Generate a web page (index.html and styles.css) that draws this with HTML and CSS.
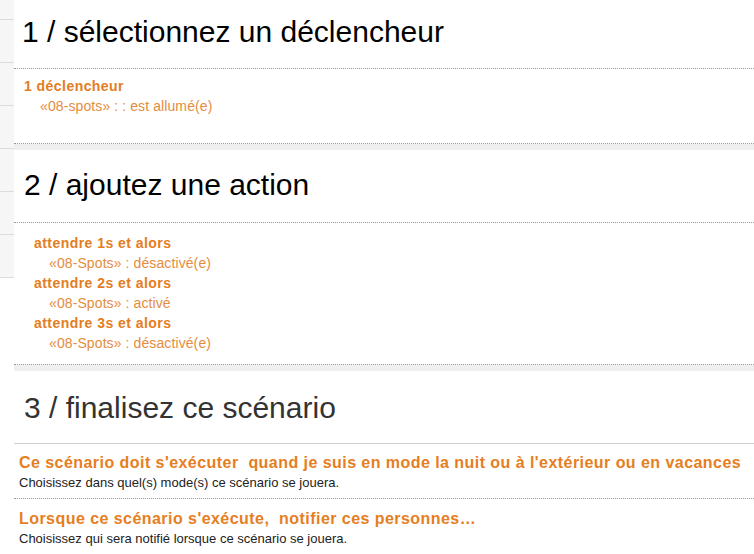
FILE: index.html
```html
<!DOCTYPE html>
<html lang="fr">
<head>
  <meta charset="UTF-8">
  <title>Nouveau scénario</title>
  <link rel="stylesheet" href="styles.css">
</head>
<body>
  <div class="page">
    <div class="sidebar">
      <div class="side-row first"></div>
      <div class="side-row"></div>
      <div class="side-row"></div>
      <div class="side-row"></div>
      <div class="side-row"></div>
      <div class="side-row"></div>
      <div class="side-row"></div>
    </div>

    <div class="wizard">
      <div class="step step-1">
        <h2 class="step-title">1 / sélectionnez un déclencheur</h2>
        <div class="step-body">
          <div class="item-title">1 déclencheur</div>
          <div class="item-detail">«08-spots» : : est allumé(e)</div>
        </div>
      </div>

      <div class="step step-2">
        <h2 class="step-title">2 / ajoutez une action</h2>
        <div class="step-body">
          <div class="item-title">attendre 1s et alors</div>
          <div class="item-detail">«08-Spots» : désactivé(e)</div>
          <div class="item-title">attendre 2s et alors</div>
          <div class="item-detail">«08-Spots» : activé</div>
          <div class="item-title">attendre 3s et alors</div>
          <div class="item-detail">«08-Spots» : désactivé(e)</div>
        </div>
      </div>

      <div class="step step-3">
        <h2 class="step-title">3 / finalisez ce scénario</h2>
        <div class="option">
          <div class="option-title">Ce scénario doit s'exécuter &nbsp;quand je suis en mode la nuit ou à l'extérieur ou en vacances</div>
          <div class="option-help">Choisissez dans quel(s) mode(s) ce scénario se jouera.</div>
        </div>
        <div class="option">
          <div class="option-title">Lorsque ce scénario s'exécute, &nbsp;notifier ces personnes…</div>
          <div class="option-help">Choisissez qui sera notifié lorsque ce scénario se jouera.</div>
        </div>
      </div>
    </div>
  </div>
</body>
</html>
```

FILE: styles.css
```css
body {
  margin: 0;
  padding: 0;
  font-family: "Liberation Sans", Arial, sans-serif;
  background-color: #fff;
}
.page {
  display: flex;
  align-items: flex-start;
  width: 754px;
  height: 554px;
  overflow: hidden;
}
.sidebar {
  width: 14px;
  flex-shrink: 0;
  background-color: #f6f6f6;
}
.side-row {
  height: 42px;
  border-bottom: 1px solid #dcdcdc;
}
.side-row.first {
  height: 19px;
}
.wizard {
  flex: 1;
  background-color: #efefef;
}
.step {
  background: #fff;
  margin-bottom: 6px;
}
.step-title {
  margin: 0;
  font-size: 30px;
  font-weight: normal;
  line-height: 36px;
  color: #000;
  white-space: nowrap;
  border-bottom: 1px dotted #999;
}
.step-1 .step-title {
  padding: 14px 0 18px 8px;
}
.step-2 .step-title {
  padding: 17px 0 19px 10px;
}
.step-3 .step-title {
  padding: 19px 0 17px 10px;
  color: #333;
  border-bottom: 1px solid #cfcfcf;
}
.step-body {
  border-bottom: 1px dotted #999;
}
.step-1 .step-body {
  padding: 7px 0 27px 10px;
}
.step-2 .step-body {
  padding: 10px 0 11px 20px;
}
.item-title {
  font-size: 14px;
  font-weight: bold;
  letter-spacing: 0.45px;
  line-height: 20px;
  color: #e47d22;
}
.item-detail {
  font-size: 14px;
  letter-spacing: 0.1px;
  line-height: 20px;
  color: #e58c3e;
  padding-left: 16px;
}
.step-2 .item-detail {
  padding-left: 15px;
}
.option {
  padding: 9px 0 5px 5px;
  border-bottom: 1px dotted #999;
}
.option + .option {
  padding-top: 10px;
  border-bottom: none;
}
.option-title {
  font-size: 16px;
  font-weight: bold;
  letter-spacing: 0.45px;
  line-height: 20px;
  white-space: nowrap;
  color: #e67e22;
}
.option-help {
  font-size: 13px;
  line-height: 20px;
  color: #222;
}
```
